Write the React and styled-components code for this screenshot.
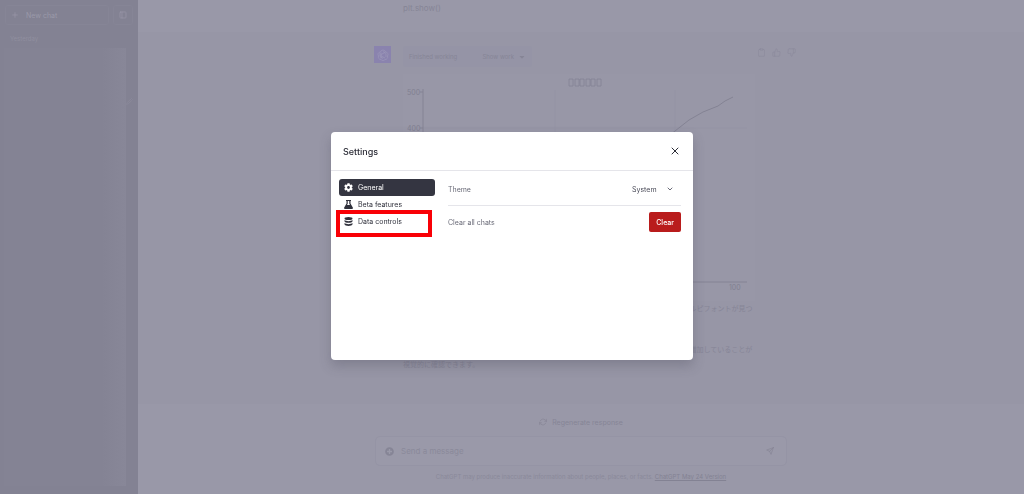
import React, { useState } from "react";
import styled, { createGlobalStyle, css } from "styled-components";
import { FaCaretDown, FaCog, FaPlusCircle } from "react-icons/fa";
import {
  FiPlus,
  FiSidebar,
  FiX,
  FiChevronDown,
  FiClipboard,
  FiThumbsUp,
  FiThumbsDown,
  FiRefreshCw,
  FiSend,
  FiEdit2,
} from "react-icons/fi";

const GlobalStyle = createGlobalStyle`
  * {
    box-sizing: border-box;
  }

  body {
    margin: 0;
    background-color: #9998a8;
    color: #868596;
    font-family: Inter, "Liberation Sans", "Noto Sans CJK JP", sans-serif;
    font-size: 7px;
    line-height: 17px;
  }

  button, input, select {
    font: inherit;
    color: inherit;
    background: none;
    border: none;
    padding: 0;
    margin: 0;
  }

  p {
    margin: 0;
  }
`;

const Page = styled.div`
  display: flex;
  min-height: 100vh;
`;

const Sidebar = styled.aside`
  display: flex;
  flex-direction: column;
  flex: 0 0 138px;
  padding: 5px 5px 8px 0;
  background-color: #838293;
`;

const SidebarTop = styled.div`
  display: flex;
  gap: 4px;
  padding-left: 5px;
`;

const SidebarButton = styled.button`
  display: flex;
  align-items: center;
  justify-content: ${(props) => (props.$grow ? "flex-start" : "center")};
  flex: ${(props) => (props.$grow ? "1" : "0 0 20px")};
  gap: 7px;
  height: 20px;
  padding: 0 5px;
  border: 1px solid #868596;
  border-radius: 3px;
  color: #9a99a9;
`;

const SidebarLabel = styled.p`
  padding: 5px 10px 1px;
  color: #908f9f;
  font-size: 6px;
`;

const History = styled.div`
  display: flex;
  flex: 1;
  margin-left: 4px;
`;

const HistoryList = styled.div`
  flex: 1;
  background: linear-gradient(to right, #848394 80%, #888798);
`;

const HistoryEdit = styled.button`
  display: flex;
  align-self: flex-start;
  flex: 0 0 7px;
  margin-top: 50px;
  color: #8f8e9f;
`;

const Main = styled.main`
  display: flex;
  flex-direction: column;
  flex: 1;
`;

const CodeTail = styled.div`
  width: 100%;
  max-width: 414px;
  height: 32px;
  margin: 0 auto;
  padding-left: 29px;
  font-size: 8px;
`;

const Message = styled.section`
  flex: 1;
  background-color: #9796a6;
`;

const MessageInner = styled.div`
  display: flex;
  gap: 12px;
  max-width: 414px;
  margin: 0 auto;
  padding-top: 14px;
`;

const Avatar = styled.div`
  display: flex;
  align-items: center;
  justify-content: center;
  flex: 0 0 17px;
  height: 17px;
  background-color: #8a83ae;
  color: #9a95b8;
`;

const MessageBody = styled.div`
  flex: 1;
`;

const MessageTop = styled.div`
  display: flex;
  justify-content: space-between;
  margin-right: -8px;
`;

const WorkStatus = styled.div`
  display: flex;
  align-items: center;
  justify-content: space-between;
  width: 129px;
  height: 21px;
  padding: 0 6px;
  border-radius: 3px;
  background-color: #9594a6;
  font-size: 6px;
`;

const ShowWork = styled.button`
  display: flex;
  align-items: center;
  gap: 4px;
`;

const Actions = styled.div`
  display: flex;
  gap: 6px;
  padding-top: 2px;
  color: #8d8c9d;
`;

const IconButton = styled.button`
  display: flex;
  cursor: pointer;
`;

const Chart = styled.svg`
  display: block;
  width: 352px;
  height: 227px;
  margin-top: 7px;
  background-color: #9897a7;
`;

const Answer = styled.p`
  width: 352px;
  margin-bottom: 11px;
  line-height: 15px;
`;

const Composer = styled.footer`
  display: flex;
  flex-direction: column;
  align-items: center;
  height: 90px;
  padding-top: 8px;
`;

const Regenerate = styled.button`
  display: flex;
  align-items: center;
  gap: 5px;
  height: 20px;
`;

const InputBar = styled.form`
  display: flex;
  align-items: center;
  gap: 7px;
  width: 100%;
  max-width: 412px;
  height: 30px;
  margin-top: 4px;
  padding: 0 12px 0 9px;
  border: 1px solid #9594a5;
  border-radius: 5px;
  background-color: #9a99a9;
`;

const MessageInput = styled.input`
  flex: 1;
  font-size: 8px;
  outline: none;

  &::placeholder {
    color: #8a899a;
    opacity: 1;
  }
`;

const Notice = styled.p`
  margin-top: 2px;
  color: #8a899a;
  font-size: 6px;

  a {
    color: #838293;
  }
`;

const Overlay = styled.div`
  position: fixed;
  inset: 0;
  display: flex;
  align-items: center;
  justify-content: center;
  padding-bottom: 2px;
`;

const Dialog = styled.div`
  width: 100%;
  max-width: 362px;
  border-radius: 4px;
  background-color: #ffffff;
  box-shadow: 0 6px 12px rgba(60, 60, 75, 0.25);
  color: #6a6b78;
`;

const DialogHeader = styled.header`
  display: flex;
  align-items: center;
  justify-content: space-between;
  height: 39px;
  padding: 0 12px;
  border-bottom: 1px solid #e5e5ea;
  color: #2b2c36;
`;

const Title = styled.h2`
  margin: 0;
  font-size: 9px;
  font-weight: 500;
`;

const DialogBody = styled.div`
  display: grid;
  grid-template-columns: 96px 1fr;
  gap: 13px;
  min-height: 189px;
  padding: 8px 12px 8px 8px;
`;

const Tabs = styled.nav`
  display: flex;
  flex-direction: column;
`;

const Tab = styled.button`
  position: relative;
  display: flex;
  align-items: center;
  gap: 5px;
  height: 17px;
  padding: 0 5px;
  border-radius: 3px;
  color: #30313c;
  cursor: pointer;

  ${(props) =>
    props.$active &&
    css`
      background-color: #343541;
      color: #ffffff;
    `}
`;

const Highlight = styled.span`
  position: absolute;
  inset: -3px 3px -7px -3px;
  border: 4px solid #f90006;
`;

const Row = styled.div`
  display: flex;
  align-items: center;
  justify-content: space-between;
  padding-bottom: 6px;

  & + & {
    padding-top: 6px;
    border-top: 1px solid #e5e5ea;
  }
`;

const SelectWrapper = styled.div`
  display: grid;
  grid-template-columns: 1fr 8px;
  align-items: center;
  height: 20px;
  padding-right: 7px;

  svg {
    grid-area: 1 / 2;
    pointer-events: none;
  }
`;

const Select = styled.select`
  grid-area: 1 / 1 / 2 / 3;
  width: 42px;
  color: #4c4d5a;
  appearance: none;
  outline: none;
`;

const ClearButton = styled.button`
  height: 20px;
  padding: 0 7px;
  border-radius: 2px;
  background-color: #b91c1c;
  color: #ffffff;
  font-weight: 500;
  cursor: pointer;
`;

const FlaskIcon = () => (
  <svg width="9" height="9" viewBox="0 0 18 18" fill="currentColor" aria-hidden="true">
    <path d="M4 0h10v2h-1v5l4.600 8c.8 1.500 0 3-1.500 3H1.900C.4 18-.4 16.500.4 15L5 7V2H4zM7.500 2v5.600L6 10h6l-1.500-2.400V2z" fillRule="evenodd" />
  </svg>
);

const DataIcon = () => (
  <svg width="9" height="9" viewBox="0 0 18 18" fill="currentColor" aria-hidden="true">
    <ellipse cx="9" cy="3" rx="8" ry="3" />
    <path d="M1 6c3 3 13 3 16 0v2.500c-1 4-15 4-16 0z" />
    <path d="M1 12c3 3 13 3 16 0v2.500c-1 4.600-15 4.600-16 0z" />
  </svg>
);

const tabs = [
  { name: "General", icon: <FaCog size={9} /> },
  { name: "Beta features", icon: <FlaskIcon /> },
  { name: "Data controls", icon: <DataIcon />, marked: true },
];

const SalesChart = () => (
  <Chart viewBox="0 0 352 227" fill="none" stroke="#848394">
    <path d="M152 16V208M272 16V208M20 54H344" stroke="#9493a4" />
    <path d="M20 15V208H344M17 18H20M17 54H20" />
    <path d="M20 206L110 180L190 122L272 57L286 46L300 38L315 32L322 27L330 23" />
    <g fill="#818091" stroke="none" fontSize="7">
      <text x="4" y="21">500</text>
      <text x="4" y="57">400</text>
      <text x="326" y="216">100</text>
    </g>
    <path
      d="M166 5h4v7h-4zM172 5h4v7h-4zM177 5h4v7h-4zM183 5h4v7h-4zM188 5h4v7h-4zM194 5h4v7h-4z"
      strokeWidth="0.8"
    />
  </Chart>
);

const Settings = () => {
  const [active, setActive] = useState("General");

  return (
    <Overlay>
      <Dialog role="dialog" aria-labelledby="settings-title">
        <DialogHeader>
          <Title id="settings-title">Settings</Title>
          <IconButton aria-label="Close">
            <FiX size={12} strokeWidth={2} />
          </IconButton>
        </DialogHeader>
        <DialogBody>
          <Tabs>
            {tabs.map(({ name, icon, marked }) => (
              <Tab key={name} $active={active === name} onClick={() => setActive(name)}>
                {icon}
                {name}
                {marked && <Highlight />}
              </Tab>
            ))}
          </Tabs>
          <div>
            <Row>
              <label htmlFor="theme">Theme</label>
              <SelectWrapper>
                <Select id="theme" defaultValue="System">
                  <option>System</option>
                  <option>Dark</option>
                  <option>Light</option>
                </Select>
                <FiChevronDown size={8} strokeWidth={3} />
              </SelectWrapper>
            </Row>
            <Row>
              <span>Clear all chats</span>
              <ClearButton>Clear</ClearButton>
            </Row>
          </div>
        </DialogBody>
      </Dialog>
    </Overlay>
  );
};

const App = () => {
  return (
    <>
      <GlobalStyle />
      <Page>
        <Sidebar>
          <SidebarTop>
            <SidebarButton $grow>
              <FiPlus size={8} />
              New chat
            </SidebarButton>
            <SidebarButton aria-label="Hide sidebar">
              <FiSidebar size={8} />
            </SidebarButton>
          </SidebarTop>
          <SidebarLabel>Yesterday</SidebarLabel>
          <History>
            <HistoryList />
            <HistoryEdit aria-label="Rename">
              <FiEdit2 size={7} />
            </HistoryEdit>
          </History>
        </Sidebar>
        <Main>
          <CodeTail>plt.show()</CodeTail>
          <Message>
            <MessageInner>
              <Avatar>
                <svg width="12" height="12" viewBox="0 0 24 24" fill="none" stroke="currentColor" strokeWidth="1.6">
                  <path d="M12 2a5 5 0 0 1 5 4 5 5 0 0 1 4 8 5 5 0 0 1-5 7 5 5 0 0 1-8 0 5 5 0 0 1-5-7 5 5 0 0 1 4-8 5 5 0 0 1 5-4z" />
                  <path d="M8 7v7l8 4M16 7l-8 4v8M12 5l6 4v7M12 19l-6-4V8" />
                </svg>
              </Avatar>
              <MessageBody>
                <MessageTop>
                  <WorkStatus>
                    Finished working
                    <ShowWork>
                      Show work
                      <FaCaretDown size={8} />
                    </ShowWork>
                  </WorkStatus>
                  <Actions>
                    <IconButton aria-label="Copy"><FiClipboard size={9} /></IconButton>
                    <IconButton aria-label="Good response"><FiThumbsUp size={9} /></IconButton>
                    <IconButton aria-label="Bad response"><FiThumbsDown size={9} /></IconButton>
                  </Actions>
                </MessageTop>
                <SalesChart />
                <Answer>
                  グラフが作成されました。ただし、タイトルや軸ラベルの日本語が表示されていませんが、ルピフォントが見つからないためです。
                </Answer>
                <Answer>
                  このグラフから、横軸の値が大きくなるにつれて縦軸の値も、ほぼ一定の割合でなめらかに増加していることが視覚的に確認できます。
                </Answer>
              </MessageBody>
            </MessageInner>
          </Message>
          <Composer>
            <Regenerate>
              <FiRefreshCw size={8} />
              Regenerate response
            </Regenerate>
            <InputBar>
              <FaPlusCircle size={9} />
              <MessageInput aria-label="Message" placeholder="Send a message" />
              <IconButton type="button" aria-label="Send"><FiSend size={8} /></IconButton>
            </InputBar>
            <Notice>
              ChatGPT may produce inaccurate information about people, places, or facts.{" "}
              <a href="#notes">ChatGPT May 24 Version</a>
            </Notice>
          </Composer>
        </Main>
      </Page>
      <Settings />
    </>
  );
};

export default App;
